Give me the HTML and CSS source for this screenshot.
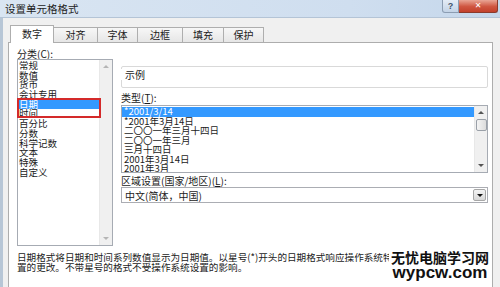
FILE: index.html
```html
<!DOCTYPE html>
<html lang="zh-CN">
<head>
  <meta charset="UTF-8" />
  <title>设置单元格格式</title>
  <link rel="stylesheet" href="styles.css">
</head>
<body>

<div class="window">
  <div class="titlebar">
    <span class="title">设置单元格格式</span>
    <div class="caption-btns">
      <span class="btn-help">?</span>
      <span class="btn-close">✕</span>
    </div>
  </div>

  <div class="dialog">
    <!-- tab strip -->
    <div class="tabs">
      <span class="tab active">数字</span>
      <span class="tab w44">对齐</span>
      <span class="tab w40">字体</span>
      <span class="tab w45">边框</span>
      <span class="tab w41">填充</span>
      <span class="tab w40">保护</span>
    </div>

    <div class="panel">
      <div class="columns">
        <div class="left">
          <div class="label">分类(<u>C</u>):</div>
          <div class="listbox cat">
            <ul class="items">
              <li>常规</li>
              <li>数值</li>
              <li>货币</li>
              <li>会计专用</li>
              <li class="selected">日期</li>
              <li>时间</li>
              <li>百分比</li>
              <li>分数</li>
              <li>科学记数</li>
              <li>文本</li>
              <li>特殊</li>
              <li>自定义</li>
            </ul>
            <div class="scrollbar">
              <span class="arrow up off"></span>
              <span class="track"></span>
              <span class="arrow down off"></span>
            </div>
            <div class="mark"></div>
          </div>
        </div>

        <div class="right">
          <div class="sample"><span>示例</span></div>

          <div class="label">类型(<u>T</u>):</div>
          <div class="listbox types">
            <ul class="items">
              <li class="selected">*2001/3/14</li>
              <li>*2001年3月14日</li>
              <li>二〇〇一年三月十四日</li>
              <li>二〇〇一年三月</li>
              <li>三月十四日</li>
              <li>2001年3月14日</li>
              <li>2001年3月</li>
            </ul>
            <div class="scrollbar">
              <span class="arrow up"></span>
              <span class="thumb"></span>
              <span class="track"></span>
              <span class="arrow down"></span>
            </div>
          </div>

          <div class="label">区域设置(国家/地区)(<u>L</u>):</div>
          <div class="combo">
            <span>中文(简体，中国)</span>
            <span class="drop"><span class="arrow down"></span></span>
          </div>
        </div>
      </div>

      <p class="desc">日期格式将日期和时间系列数值显示为日期值。以星号(*)开头的日期格式响应操作系统特<br>置的更改。不带星号的格式不受操作系统设置的影响。</p>
    </div>
  </div>

  <div class="watermark">
    <div class="wm-cn">无忧电脑学习网</div>
    <div class="wm-en">wypcw.com</div>
  </div>
</div>

</body>
</html>
```

FILE: styles.css
```css
* {
  box-sizing: border-box;
}

body {
  margin: 0;
  font-family: "Noto Sans CJK SC", "Noto Sans", sans-serif;
  font-size: 10px;
  color: #1b1b1b;
}

u {
  text-decoration: underline;
}

.window {
  position: relative;
  width: 500px;
  height: 287px;
  overflow: hidden;
  background: #f0f0f0;
}

/* title bar */
.titlebar {
  display: flex;
  height: 18px;
  background: linear-gradient(90deg, #d9e5f2, #cfdeef 70%, #c5d7eb);
  border-bottom: 1px solid #b4c4d6;
}

.title {
  padding-left: 5px;
  line-height: 17px;
  font-size: 10.5px;
  color: #222;
}

.caption-btns {
  display: flex;
  height: 13px;
  margin-left: auto;
  margin-right: 2px;
}

.btn-help {
  width: 17px;
  border: 1px solid #8c9db2;
  border-top: none;
  border-radius: 0 0 0 3px;
  background: linear-gradient(#e4ecf6, #c3d3e6);
  color: #44546a;
  font-family: "Liberation Sans", sans-serif;
  font-weight: bold;
  font-size: 9px;
  line-height: 12px;
  text-align: center;
}

.btn-close {
  width: 39px;
  border: 1px solid #8b3a2c;
  border-top: none;
  border-left: none;
  border-radius: 0 0 3px 0;
  background: linear-gradient(#e9a595, #cf5540 55%, #c2412c);
  color: #fff;
  font-family: "DejaVu Sans", sans-serif;
  font-weight: bold;
  font-size: 8px;
  line-height: 12px;
  text-align: center;
}

/* dialog body */
.dialog {
  height: 269px;
  border-left: 3px solid #b7c6d6;
}

.tabs {
  display: flex;
  align-items: flex-end;
  height: 24px;
  padding-left: 7px;
}

.tab {
  width: 44px;
  height: 15px;
  margin-left: -1px;
  border: 1px solid #aeaeae;
  border-bottom: none;
  background: linear-gradient(#f7f7f7, #e6e6e6);
  text-align: center;
  line-height: 14px;
}

.tab.active {
  position: relative;
  z-index: 1;
  width: 44px;
  height: 18px;
  margin-left: 0;
  margin-bottom: -1px;
  background: #fff;
  line-height: 16px;
}

.w40 { width: 41px; }
.w41 { width: 42px; }
.w44 { width: 45px; }
.w45 { width: 46px; }

.panel {
  width: 485px;
  height: 260px;
  margin-left: 5px;
  border: 1px solid #adadad;
  background: #fff;
}

.columns {
  display: flex;
  padding-left: 8px;
}

.label {
  line-height: 11px;
  white-space: nowrap;
}

.left {
  width: 96px;
}

.left .label {
  margin-top: 5px;
}

.right {
  width: 367px;
  margin-left: 8px;
}

/* list boxes */
.listbox {
  display: flex;
  border: 1px solid #a6abb3;
  background: #fff;
}

.cat {
  position: relative;
  height: 187px;
}

.types {
  height: 68px;
  margin-top: 2px;
}

.items {
  flex: 1;
  margin: 0;
  padding: 1px 0 0;
  list-style: none;
  overflow: hidden;
  font-size: 9.5px;
}

.items li {
  height: 9.7px;
  padding-left: 1px;
  line-height: 9.7px;
  white-space: nowrap;
}

.types .items li {
  height: 9.5px;
  line-height: 9.5px;
  padding-left: 2px;
}

.items li.selected {
  background: #3399ff;
  color: #fff;
}

.scrollbar {
  display: flex;
  flex-direction: column;
  align-items: center;
  width: 13px;
  background: #f0f0f0;
  border-left: 1px solid #e8e8e8;
}

.scrollbar .track {
  flex: 1;
}

.arrow {
  width: 0;
  height: 0;
  margin: 5px 0;
  border-left: 3px solid transparent;
  border-right: 3px solid transparent;
}

.arrow.up {
  border-bottom: 3px solid #555;
}

.arrow.down {
  border-top: 3px solid #555;
}

.arrow.up.off {
  border-bottom-color: #b5b5b5;
}

.arrow.down.off {
  border-top-color: #b5b5b5;
}

.thumb {
  width: 11px;
  height: 12px;
  border: 1px solid #9aa0a8;
  border-radius: 2px;
  background: linear-gradient(90deg, #f4f4f4, #dcdcdc);
}

/* red annotation box over the category list */
.mark {
  position: absolute;
  left: -1px;
  top: 38px;
  width: 84px;
  height: 20px;
  border: 2px solid #d42a2a;
}

/* sample group box */
.sample {
  height: 22px;
  margin-top: 23px;
  border: 1px solid #d9d9d9;
  border-radius: 2px;
}

.sample span {
  display: inline-block;
  margin: -6px 0 0 -1px;
  padding: 0 2px 0 4px;
  background: #fff;
  line-height: 11px;
}

.right .label {
  margin-top: 2px;
}

.sample + .label {
  margin-top: 4px;
}

/* combo box */
.combo {
  display: flex;
  align-items: center;
  height: 16px;
  margin-top: 1px;
  padding-left: 3px;
  border: 1px solid #abadb3;
}

.drop {
  display: flex;
  justify-content: center;
  align-items: center;
  width: 13px;
  height: 12px;
  margin-left: auto;
  margin-right: 1px;
  border: 1px solid #a7a7a7;
  border-radius: 2px;
  background: linear-gradient(#f3f3f3, #d8d8d8);
}

.drop .arrow {
  margin: 0;
  border-top-color: #111;
}

.desc {
  margin: 6px 0 0;
  padding-left: 8px;
  font-size: 9.6px;
  line-height: 10px;
  white-space: nowrap;
  overflow: hidden;
}

/* site watermark stamped over the bottom right corner */
.watermark {
  position: absolute;
  top: 249px;
  left: 389px;
  padding: 0 2px;
  background: #fff;
  font-weight: bold;
  color: #111;
  text-align: center;
}

.wm-cn {
  font-size: 14px;
  line-height: 16px;
}

.wm-en {
  font-family: "Liberation Sans", sans-serif;
  font-size: 17px;
  line-height: 15px;
}
```
